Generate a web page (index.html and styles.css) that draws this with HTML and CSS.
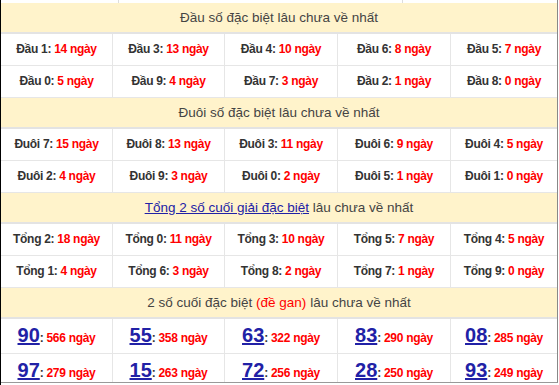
FILE: index.html
```html
<!DOCTYPE html>
<html lang="vi">
<head>
<meta charset="utf-8">
<title>Thống kê lâu chưa về</title>
<link rel="stylesheet" href="styles.css">
</head>
<body>
<div class="page">
  <div class="strip"><span class="s1"></span><span class="s2"></span><span class="s3"></span></div>
  <div class="frame">
    <div class="board">
      <div class="head">Đầu số đặc biệt lâu chưa về nhất</div>
      <div class="cell">Đầu 1: <b>14 ngày</b></div>
      <div class="cell">Đầu 3: <b>13 ngày</b></div>
      <div class="cell">Đầu 4: <b>10 ngày</b></div>
      <div class="cell">Đầu 6: <b>8 ngày</b></div>
      <div class="cell end">Đầu 5: <b>7 ngày</b></div>
      <div class="cell">Đầu 0: <b>5 ngày</b></div>
      <div class="cell">Đầu 9: <b>4 ngày</b></div>
      <div class="cell">Đầu 7: <b>3 ngày</b></div>
      <div class="cell">Đầu 2: <b>1 ngày</b></div>
      <div class="cell end">Đầu 8: <b>0 ngày</b></div>

      <div class="head">Đuôi số đặc biệt lâu chưa về nhất</div>
      <div class="cell">Đuôi 7: <b>15 ngày</b></div>
      <div class="cell">Đuôi 8: <b>13 ngày</b></div>
      <div class="cell">Đuôi 3: <b>11 ngày</b></div>
      <div class="cell">Đuôi 6: <b>9 ngày</b></div>
      <div class="cell end">Đuôi 4: <b>5 ngày</b></div>
      <div class="cell">Đuôi 2: <b>4 ngày</b></div>
      <div class="cell">Đuôi 9: <b>3 ngày</b></div>
      <div class="cell">Đuôi 0: <b>2 ngày</b></div>
      <div class="cell">Đuôi 5: <b>1 ngày</b></div>
      <div class="cell end">Đuôi 1: <b>0 ngày</b></div>

      <div class="head"><a class="link" href="#">Tổng 2 số cuối giải đặc biệt</a> lâu chưa về nhất</div>
      <div class="cell">Tổng 2: <b>18 ngày</b></div>
      <div class="cell">Tổng 0: <b>11 ngày</b></div>
      <div class="cell">Tổng 3: <b>10 ngày</b></div>
      <div class="cell">Tổng 5: <b>7 ngày</b></div>
      <div class="cell end">Tổng 4: <b>5 ngày</b></div>
      <div class="cell">Tổng 1: <b>4 ngày</b></div>
      <div class="cell">Tổng 6: <b>3 ngày</b></div>
      <div class="cell">Tổng 8: <b>2 ngày</b></div>
      <div class="cell">Tổng 7: <b>1 ngày</b></div>
      <div class="cell end">Tổng 9: <b>0 ngày</b></div>

      <div class="head">2 số cuối đặc biệt <span class="red">(đề gan)</span> lâu chưa về nhất</div>
      <div class="cell big"><a class="num" href="#">90</a>: <b>566 ngày</b></div>
      <div class="cell big"><a class="num" href="#">55</a>: <b>358 ngày</b></div>
      <div class="cell big"><a class="num" href="#">63</a>: <b>322 ngày</b></div>
      <div class="cell big"><a class="num" href="#">83</a>: <b>290 ngày</b></div>
      <div class="cell big end"><a class="num" href="#">08</a>: <b>285 ngày</b></div>
      <div class="cell big"><a class="num" href="#">97</a>: <b>279 ngày</b></div>
      <div class="cell big"><a class="num" href="#">15</a>: <b>263 ngày</b></div>
      <div class="cell big"><a class="num" href="#">72</a>: <b>256 ngày</b></div>
      <div class="cell big"><a class="num" href="#">28</a>: <b>250 ngày</b></div>
      <div class="cell big end"><a class="num" href="#">93</a>: <b>249 ngày</b></div>
    </div>
  </div>
</div>
</body>
</html>
```

FILE: styles.css
```css
html, body {
  margin: 0;
  padding: 0;
  background: #fff;
}
.page {
  height: 385px;
  border-left: 1px solid #000;
  font-family: "Liberation Sans", Arial, sans-serif;
  color: #333;
  overflow: hidden;
}
.strip {
  display: flex;
  height: 3px;
  border-right: 1px solid #888;
  width: 556px;
}
.strip .s1 { width: 117px; }
.strip .s2 { width: 283px; border-left: 1px solid #ddd; }
.strip .s3 { flex: 1; border-left: 1px solid #ddd; }
.frame {
  width: 556px;
  height: 379px;
  overflow: hidden;
  border-right: 1px solid #888;
  border-bottom: 1px solid #999;
}
.board {
  display: grid;
  grid-template-columns: 112px 112px 113px 113px 106px;
  grid-auto-rows: auto;
}
.head {
  grid-column: 1 / -1;
  height: 29px;
  line-height: 29px;
  background: #fff3cb;
  border-bottom: 2px solid #e3e3e3;
  text-align: center;
  font-size: 13.5px;
  color: #444;
}
.link {
  color: #2121a6;
  text-decoration: underline;
}
.red { color: #f00; }
.cell {
  box-sizing: border-box;
  height: 32px;
  line-height: 31px;
  border-right: 1px solid #e6e6e6;
  border-bottom: 1px solid #e6e6e6;
  text-align: center;
  font-size: 12px;
  letter-spacing: -0.3px;
  font-weight: bold;
  color: #333;
  white-space: nowrap;
}
.cell.end { border-right: none; }
.cell b { color: #f00; }
.cell.big {
  height: 35px;
  line-height: 32px;
}
.num {
  font-size: 20px;
  letter-spacing: 0;
  font-weight: bold;
  color: #2121a6;
  text-decoration: underline;
}
```
